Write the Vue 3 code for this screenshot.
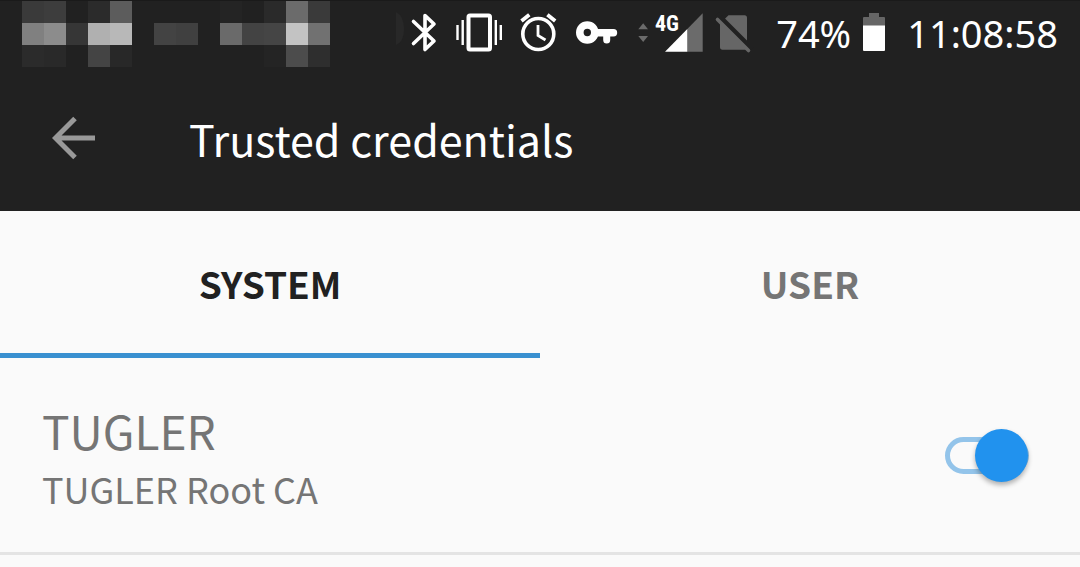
<script setup>
import { ref } from 'vue'

const mosaicRows = [
  ['#3a3a3a', '#3d3d3d', '', '#2b2b2b', '#5c5c5c', '', '', '', '', '#242424', '', '#2a2a2a', '#6b6b6b', '#3a3a3a'],
  ['#808080', '#8c8c8c', '#363636', '#b0b0b0', '#b8b8b8', '', '#434343', '#404040', '', '#6a6a6a', '#434343', '#454545', '#c3c3c3', '#717171'],
  ['#2b2b2b', '#292929', '', '#444444', '#282828', '', '', '', '', '', '', '#242424', '#4c4c4c', '#2e2e2e'],
]
const cells = mosaicRows.flat()

const tabs = [
  { id: 'system', label: 'SYSTEM' },
  { id: 'user', label: 'USER' },
]
const active = ref('system')

const credentials = ref([
  { id: 'tugler', name: 'TUGLER', detail: 'TUGLER Root CA', enabled: true },
])
</script>

<template>
  <div class="screen">
    <header class="top">
      <div class="status">
        <div class="mosaic" aria-hidden="true">
          <span v-for="(c, i) in cells" :key="i" :style="{ background: c || 'transparent' }"></span>
        </div>
        <div class="indicators">
          <svg width="50" height="66" viewBox="0 0 50 66" fill="none" aria-label="Bluetooth">
            <path d="M0 12Q8 16 8 29Q8 42 0 45Z" fill="#282828" />
            <path d="M17.500 21.500L38 41L29 49.500V15.500L38 24L17.500 43.500" stroke="#fff" stroke-width="3.600" stroke-linecap="round" stroke-linejoin="round" />
          </svg>
          <svg width="64" height="66" viewBox="0 0 64 66" fill="none" stroke="#fff" aria-label="Vibrate">
            <rect x="22.500" y="15.500" width="21.500" height="34" rx="1.500" stroke-width="4" />
            <path d="M16.700 20V45M11.500 25V40M49.800 20V45M54.800 25V40" stroke-width="2.400" />
          </svg>
          <svg width="56" height="66" viewBox="0 0 56 66" fill="none" stroke="#fff" aria-label="Alarm">
            <circle cx="28.300" cy="34" r="15.500" stroke-width="3.600" />
            <path d="M11.500 21L19.300 14.700M37.400 14.700L45.200 21" stroke-width="3.800" />
            <path d="M28 25V35.500L35.500 40" stroke-width="2.800" />
          </svg>
          <svg width="60" height="66" viewBox="0 0 60 66" fill="none" stroke="#fff" aria-label="VPN">
            <circle cx="21.300" cy="32.500" r="7.500" stroke-width="7.600" />
            <path d="M31 32.700H47.500" stroke-width="7.400" stroke-linecap="round" />
            <path d="M40.700 34V40" stroke-width="7" stroke-linecap="round" />
          </svg>
          <svg width="82" height="66" viewBox="0 0 82 66" aria-label="Mobile signal">
            <path d="M12.300 29.300L17.200 23.300L22 29.300ZM12.300 36L17.200 42L22 36Z" fill="#6b6b6b" />
            <path d="M61.300 29V51.700H76.700V13.300Z" fill="#6b6b6b" />
            <path d="M39 51.700L61.300 29V51.700Z" fill="#fff" />
            <text class="network" x="29" y="31">4G</text>
          </svg>
          <svg width="50" height="66" viewBox="0 0 50 66" aria-label="No SIM">
            <path d="M20.500 15.300H36.500Q39 15.300 39 18V47Q39 49.700 36.500 49.700H14.500Q12 49.700 12 47V23.500Z" fill="#666" />
            <path d="M9 14L44 49" stroke="#212121" stroke-width="5" />
            <path d="M9.500 19.500L40.500 50.500" stroke="#666" stroke-width="3.600" stroke-linecap="round" />
          </svg>
          <span class="percent">74%</span>
          <svg width="22" height="66" viewBox="0 0 22 66" aria-label="Battery">
            <path d="M6 13H16V17H21Q22 17 22 18V26H0V18Q0 17 1 17H6Z" fill="#666" />
            <path d="M0 25.500H22V50Q22 51 21 51H1Q0 51 0 50Z" fill="#fff" />
          </svg>
          <time class="clock">11:08:58</time>
        </div>
      </div>
      <div class="appbar">
        <button class="back" type="button" aria-label="Back">
          <svg width="44" height="44" viewBox="0 0 44 44" fill="none" stroke="#999" stroke-width="5">
            <path d="M43 22H4M23 2.500L3.500 22L23 41.500" />
          </svg>
        </button>
        <h1>Trusted credentials</h1>
      </div>
    </header>

    <nav class="tabs" role="tablist">
      <button
        v-for="t in tabs"
        :key="t.id"
        type="button"
        role="tab"
        class="tab"
        :class="{ selected: active === t.id }"
        :aria-selected="active === t.id"
        @click="active = t.id"
      >{{ t.label }}</button>
    </nav>

    <main>
      <div v-for="c in credentials" :key="c.id" class="row">
        <label class="names" :for="c.id">
          <span class="name">{{ c.name }}</span>
          <span class="detail">{{ c.detail }}</span>
        </label>
        <input :id="c.id" v-model="c.enabled" class="switch" type="checkbox" role="switch" />
      </div>
    </main>
  </div>
</template>

<style>
html,
body {
  margin: 0;
  background: #fafafa;
}
</style>

<style scoped>
.screen {
  font-family: "Noto Sans CJK SC", "Open Sans", sans-serif;
  color: #757575;
  background: #fafafa;
}
.top {
  background: #212121;
  color: #fff;
  box-sizing: border-box;
  border-top: 1px solid #1a1a1a;
}
.status {
  display: flex;
  justify-content: space-between;
  align-items: flex-start;
  height: 66px;
  padding: 0 22px;
}
.mosaic {
  display: grid;
  grid-template-columns: repeat(14, 22px);
  grid-auto-rows: 22px;
}
.indicators {
  display: flex;
  align-items: center;
  margin-top: -1px;
}
.indicators svg {
  flex: none;
  display: block;
}
.network {
  font: bold 22px "Liberation Sans Narrow", "Roboto Condensed", Roboto, sans-serif;
  fill: #fff;
}
.percent,
.clock {
  font-family: "Noto Sans", sans-serif;
  font-size: 38px;
  line-height: 66px;
}
.percent {
  margin: 0 12px 0 18px;
}
.clock {
  margin-left: 22px;
}
.appbar {
  display: flex;
  align-items: center;
  height: 144px;
  padding: 0 52px;
  box-sizing: border-box;
  padding-bottom: 3px;
}
.back {
  display: block;
  padding: 0;
  border: 0;
  background: none;
}
.back svg {
  display: block;
}
h1 {
  margin: 0 0 0 93px;
  font-size: 43px;
  line-height: 64px;
  font-weight: 400;
}
.tabs {
  display: grid;
  grid-template-columns: 1fr 1fr;
}
.tab {
  height: 147px;
  padding: 1px 0 0;
  border: 0;
  border-bottom: 5px solid transparent;
  background: none;
  color: #757575;
  font: bold 37px "Noto Sans CJK SC", sans-serif;
}
.tab.selected {
  color: #212121;
  border-bottom-color: #3990d0;
}
.row {
  display: flex;
  align-items: center;
  justify-content: space-between;
  padding: 39px 51px 39px 42px;
  border-bottom: 3px solid #e4e4e4;
}
.names {
  display: flex;
  flex-direction: column;
}
.name {
  font-size: 46px;
  line-height: 66px;
}
.detail {
  font-size: 36px;
  line-height: 50px;
}
.switch {
  appearance: none;
  display: flex;
  align-items: center;
  box-sizing: border-box;
  width: 84px;
  height: 37px;
  margin: 0;
  border: 5px solid #93c4ea;
  border-radius: 19px;
}
.switch::before {
  content: "";
  flex: none;
  width: 53px;
  height: 53px;
  border-radius: 50%;
  background: #9e9e9e;
  box-shadow: 0 3px 5px rgba(0, 0, 0, 0.3);
}
.switch:checked::before {
  margin-left: 25px;
  background: #2192ee;
}
</style>
